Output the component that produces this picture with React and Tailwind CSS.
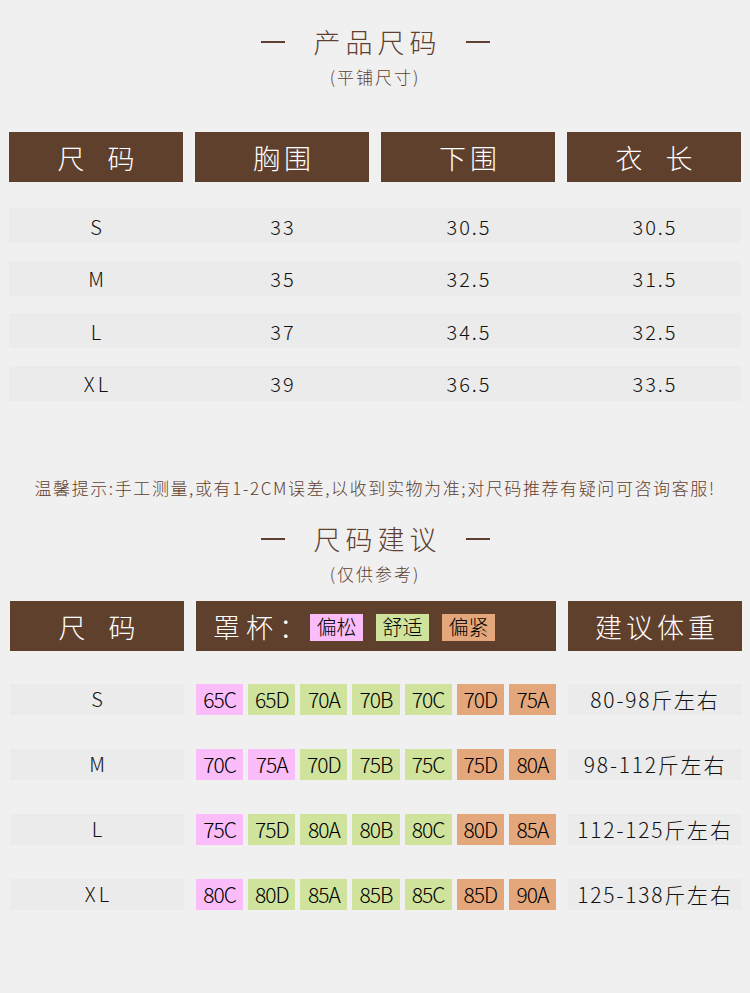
import React from "react";

const FONT = { fontFamily: '"Noto Sans CJK SC", "Noto Sans", sans-serif' };

function Title({ text, sub }) {
  return (
    <div className="flex flex-col items-center">
      <div className="flex items-center h-[36px]">
        <div className="w-[24px] h-[2px] bg-[#5e4030]" />
        <div className="mx-[24px] text-[27px] leading-[36px] tracking-[5px] text-[#5e4030] pl-[5px]">{text}</div>
        <div className="w-[24px] h-[2px] bg-[#5e4030]" />
      </div>
      <div className="mt-[5px] text-[17px] leading-[24px] tracking-[2px] text-[#5e4030]">{sub}</div>
    </div>
  );
}

function Head({ children, className = "" }) {
  return (
    <div className={"h-[50px] bg-[#5f402d] text-white flex items-center justify-center text-[27px] pt-[3px] " + className}>
      {children}
    </div>
  );
}

const t1 = [
  ["S", "33", "30.5", "30.5"],
  ["M", "35", "32.5", "31.5"],
  ["L", "37", "34.5", "32.5"],
  ["XL", "39", "36.5", "33.5"],
];

const PINK = "bg-[#fabdf9]";
const GREEN = "bg-[#cfe39c]";
const ORANGE = "bg-[#e3a77b]";
const kinds = [PINK, GREEN, GREEN, GREEN, GREEN, ORANGE, ORANGE];

const t2 = [
  ["S", ["65C", "65D", "70A", "70B", "70C", "70D", "75A"], "80-98斤左右", [PINK, GREEN, GREEN, GREEN, GREEN, ORANGE, ORANGE]],
  ["M", ["70C", "75A", "70D", "75B", "75C", "75D", "80A"], "98-112斤左右", [PINK, PINK, GREEN, GREEN, GREEN, ORANGE, ORANGE]],
  ["L", ["75C", "75D", "80A", "80B", "80C", "80D", "85A"], "112-125斤左右", kinds],
  ["XL", ["80C", "80D", "85A", "85B", "85C", "85D", "90A"], "125-138斤左右", kinds],
];

export default function App() {
  return (
    <div style={FONT} className="w-[750px] h-[993px] bg-[#f0f0f0] pt-[24px] overflow-hidden font-light">
      <Title text="产品尺码" sub="(平铺尺寸)" />

      <div className="mt-[43px] px-[9px]">
        <div className="grid grid-cols-4 gap-[12px]">
          <Head><span className="flex gap-[23px]"><span>尺</span><span>码</span></span></Head>
          <Head><span className="tracking-[4px] pl-[4px]">胸围</span></Head>
          <Head><span className="tracking-[4px] pl-[4px]">下围</span></Head>
          <Head><span className="flex gap-[23px]"><span>衣</span><span>长</span></span></Head>
        </div>
        <div className="mt-[26px] flex flex-col gap-[17.5px]">
          {t1.map((r) => (
            <div key={r[0]} className="h-[35px] bg-[#ebebeb] grid grid-cols-4 gap-[12px] text-[20px] text-[#111] items-center">
              {r.map((c, i) => (
                <div key={i} className={"text-center pt-[2px] " + (i === 0 ? "tracking-[3px] pl-[3px]" : "tracking-[2px] pl-[2px]")}>{c}</div>
              ))}
            </div>
          ))}
        </div>
      </div>

      <div className="mt-[75px] text-center text-[17px] leading-[24px] tracking-[1.6px] text-[#5e4030]">
        温馨提示:手工测量,或有1-2CM误差,以收到实物为准;对尺码推荐有疑问可咨询客服!
      </div>

      <div className="mt-[21px]">
        <Title text="尺码建议" sub="(仅供参考)" />
      </div>

      <div className="mt-[15px] pl-[10px] pr-[8px]">
        <div className="grid grid-cols-[174px_360px_174px] gap-[12px]">
          <Head><span className="flex gap-[23px]"><span>尺</span><span>码</span></span></Head>
          <Head className="!justify-start pl-[17px]">
            <span className="tracking-[6px]">罩杯：</span>
            <span className="ml-[-2px] flex gap-[13px] text-[20px] text-[#000]">
              <span className={"w-[53px] h-[27px] flex items-center justify-center " + PINK}>偏松</span>
              <span className={"w-[53px] h-[27px] flex items-center justify-center " + GREEN}>舒适</span>
              <span className={"w-[53px] h-[27px] flex items-center justify-center " + ORANGE}>偏紧</span>
            </span>
          </Head>
          <Head><span className="tracking-[4px] pl-[4px]">建议体重</span></Head>
        </div>
        <div className="mt-[33px] flex flex-col gap-[36px]">
          {t2.map((r) => (
            <div key={r[0]} className="h-[29px] grid grid-cols-[174px_360px_174px] gap-[12px]">
              <div className="bg-[#ebebeb] flex items-center justify-center text-[20px] text-[#111] tracking-[3px] pl-[3px]">{r[0]}</div>
              <div className="grid grid-cols-7 gap-[5px]">
                {r[1].map((c, i) => (
                  <div key={i} className={"flex items-center justify-center text-[21px] tracking-[-1px] text-[#000] " + r[3][i]}>{c}</div>
                ))}
              </div>
              <div className="bg-[#ebebeb] flex items-center justify-center text-[21px] text-[#111] tracking-[1.8px] whitespace-nowrap">{r[2]}</div>
            </div>
          ))}
        </div>
      </div>
    </div>
  );
}
